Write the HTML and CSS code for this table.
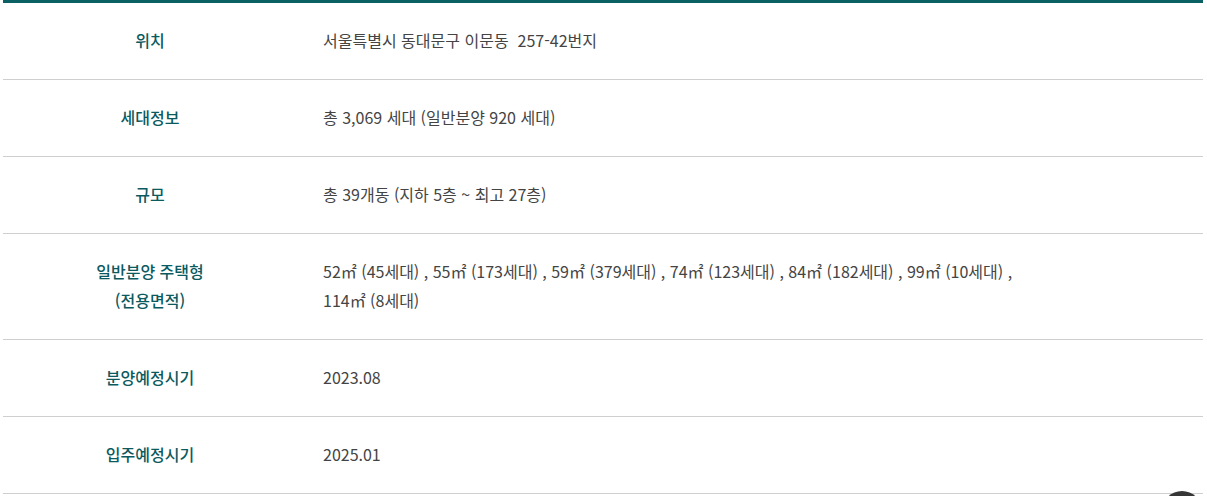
FILE: index.html
```html
<!DOCTYPE html>
<html lang="ko">
<head>
  <meta charset="UTF-8" />
  <meta name="viewport" content="width=device-width, initial-scale=1.0"/>
  <title>단지 정보</title>
  <link rel="stylesheet" href="styles.css">
</head>
<body>

  <div class="summary">
    <table class="summary-table">
      <tr>
        <th>위치</th>
        <td>서울특별시 동대문구 이문동&nbsp; 257-42번지</td>
      </tr>
      <tr>
        <th>세대정보</th>
        <td>총 3,069 세대 (일반분양 920 세대)</td>
      </tr>
      <tr>
        <th>규모</th>
        <td>총 39개동 (지하 5층 ~ 최고 27층)</td>
      </tr>
      <tr>
        <th>일반분양 주택형<br>(전용면적)</th>
        <td>52㎡ (45세대) , 55㎡ (173세대) , 59㎡ (379세대) , 74㎡ (123세대) , 84㎡ (182세대) , 99㎡ (10세대) ,<br>114㎡ (8세대)</td>
      </tr>
      <tr>
        <th>분양예정시기</th>
        <td>2023.08</td>
      </tr>
      <tr>
        <th>입주예정시기</th>
        <td>2025.01</td>
      </tr>
    </table>
  </div>

  <a href="#" class="btn-top" aria-label="맨 위로"></a>

</body>
</html>
```

FILE: styles.css
```css
body {
  margin: 0;
  background: #fff;
  font-family: "Noto Sans CJK KR", "Noto Sans", sans-serif;
  font-size: 16px;
  color: #444;
}

.summary {
  width: 1200px;
  margin: 0 0 0 3px;
}

.summary-table {
  width: 100%;
  border-collapse: collapse;
  border-top: 3px solid #0b6064;
}

.summary-table th,
.summary-table td {
  padding: 23px 0 24px;
  line-height: 29px;
  border-bottom: 1px solid #cfcfcf;
  vertical-align: middle;
}

.summary-table th {
  width: 294px;
  text-align: center;
  font-weight: 500;
  color: #0b5a60;
}

.summary-table td {
  padding-left: 26px;
  text-align: left;
  font-weight: 400;
  color: #444;
}

.btn-top {
  position: fixed;
  right: 5px;
  bottom: -35px;
  width: 40px;
  height: 40px;
  border-radius: 50%;
  background: #363636;
}
```
